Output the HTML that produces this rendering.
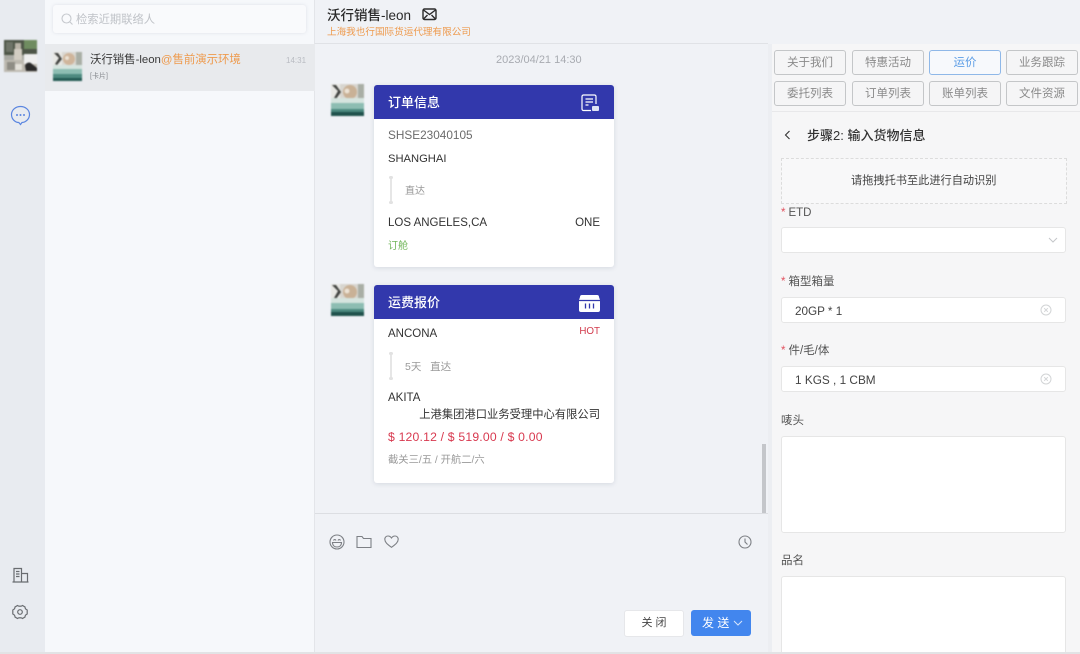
<!DOCTYPE html>
<html><head><meta charset="utf-8">
<style>
html,body{margin:0;padding:0;width:1080px;height:654px;overflow:hidden;background:#f0f2f6}
body{position:relative;font-family:"Liberation Sans","Noto Sans CJK SC",sans-serif;color:#333}
.a{position:absolute}
.t{position:absolute;white-space:nowrap;line-height:1}
.btn{position:absolute;width:70px;height:23px;border:1px solid #c4c6c8;border-radius:3px;text-align:center;font-size:11.500px;line-height:25px;color:#8a8a8a;background:#f5f5f6}
.card{position:absolute;left:374px;width:240px;background:#fff;border-radius:3px;box-shadow:0 1px 5px rgba(120,130,150,.22)}
.hd{position:absolute;left:0;top:0;width:240px;height:34px;background:#3238ac;border-radius:3px 3px 0 0}
.input{position:absolute;left:781px;width:283px;background:#fff;border:1px solid #e6e6e6;border-radius:3px}
.lb{position:absolute;white-space:nowrap;line-height:1;left:781px;font-size:11.500px;color:#555}
.lb span{color:#e2525f;margin-right:3px}
.av{filter:blur(.7px)}
</style></head><body>
<div class="a" style="left:0;top:0;width:45px;height:654px;background:#e8ebf0"></div>
<div class="a" style="left:45px;top:0;width:270px;height:654px;background:#f6f8fb"></div>
<div class="a" style="left:314px;top:0;width:1px;height:654px;background:#e3e5e9"></div>
<div class="a" style="left:45px;top:44px;width:270px;height:47px;background:#e8eaed"></div>
<div class="a" style="left:53px;top:5px;width:253px;height:28px;background:#f9fafc;border-radius:3px;box-shadow:0 0 3px rgba(150,160,175,.25)"></div>
<svg class="a" style="left:60px;top:12px" width="14" height="14" viewBox="0 0 14 14" fill="none" stroke="#c6c9ce" stroke-width="1.100"><circle cx="6.500" cy="6.500" r="4.500"/><path d="M10 10l2.500 2.500"/></svg>
<div class="t" style="left:76px;top:15px;font-size:11.300px;color:#bfc2c7">检索近期联络人</div>

<svg class="a av" style="left:4px;top:40px" width="33" height="32" viewBox="0 0 33 32"><rect width="33" height="32" rx="1" fill="#a9aaa3"/><rect width="33" height="15" fill="#4d5547"/><rect x="20" width="13" height="9" fill="#6f8c60"/><rect x="2" y="2" width="7" height="10" fill="#6e7468"/><rect x="11" y="3" width="6" height="6" fill="#b9b4a8"/><rect x="10" y="9" width="8" height="14" fill="#d2cdc2"/><rect y="20" width="33" height="12" fill="#bdb9b0"/><rect x="20" y="14" width="13" height="10" fill="#efefef"/><path d="M21 26a4 4 0 0 1 7-2l5 4v3H22z" fill="#2b2a2a"/><rect x="3" y="22" width="8" height="8" fill="#8f8d85"/><rect x="11" y="24" width="7" height="6" fill="#e3e0d9"/></svg>
<svg class="a av" style="left:53px;top:52px" width="29" height="29" viewBox="0 0 29 29"><rect width="29" height="29" fill="#dad8d2"/><rect width="9" height="14" fill="#e8e8e4"/><path d="M1 1l5 5-4 6 2 1 5-6-4-6z" fill="#3f413e"/><ellipse cx="16" cy="7" rx="6" ry="6" fill="#cfb59b"/><circle cx="14" cy="6" r="2" fill="#ece3d6"/><rect x="23" width="6" height="13" fill="#a9aea5"/><rect y="13" width="29" height="5" fill="#d6e4df"/><rect y="17" width="29" height="6" fill="#8dbdb2"/><rect y="22" width="29" height="4" fill="#4e8a80"/><rect y="26" width="29" height="3" fill="#235a53"/></svg>
<div class="t" style="left:90px;top:55px;font-size:11.400px;color:#3a3a3a">沃行销售-leon<span style="color:#ee9a4d">@售前演示环境</span></div>
<div class="t" style="left:286px;top:57px;font-size:8px;color:#b9bcc2">14:31</div>
<div class="t" style="left:90px;top:73px;font-size:7px;color:#85888d">[卡片]</div>

<svg class="a" style="left:10px;top:105px" width="21" height="21" viewBox="0 0 21 21" fill="none"><path d="M10.500 1.500c5 0 9 3.400 9 8s-4 8-7.500 8l-1.500 2-1.700-2C5 17.500 1.500 14 1.500 9.500s4-8 9-8z" stroke="#5b86e0" stroke-width="1.200"/><circle cx="7" cy="10" r="1" fill="#5b86e0"/><circle cx="10.500" cy="10" r="1" fill="#5b86e0"/><circle cx="14" cy="10" r="1" fill="#5b86e0"/></svg>
<svg class="a" style="left:12px;top:567px" width="17" height="16" viewBox="0 0 17 16" fill="none" stroke="#696c70" stroke-width="1.200"><path d="M.500 15h16M2 15V1.500h7.500V15M9.500 6.500h6V15M4 4.500h3.500M4 7h3.500M4 9.500h3.500"/></svg>
<svg class="a" style="left:12px;top:604px" width="16" height="16" viewBox="0 0 16 16" fill="none" stroke="#696c70" stroke-width="1.200"><path d="M5.500 1.500c1 1 4 1 5 0l2.500 1.500c0 1.500 1 2.500 2.200 3v4c-1.200.5-2.200 1.500-2.200 3l-2.500 1.500c-1-1-4-1-5 0L3 13c0-1.500-1-2.500-2.200-3V6C2 5.500 3 4.500 3 3z"/><circle cx="8" cy="8" r="2.300"/></svg>

<div class="a" style="left:315px;top:43px;width:453px;height:1px;background:#e0e2e6"></div>
<div class="t" style="left:327px;top:9px;font-size:13.500px;color:#2a2a2a;font-weight:500">沃行销售-leon</div>
<svg class="a" style="left:422px;top:8px" width="15" height="13" viewBox="0 0 15 13" fill="none" stroke="#2a2a2a" stroke-width="1.400"><rect x="1" y="1" width="13" height="10.500" rx="1.500"/><path d="M1.500 2l6 4.500 6-4.500M1.500 11l4-4M13.500 11l-4-4"/></svg>
<div class="t" style="left:327px;top:28px;font-size:9.600px;color:#ee9a4d">上海我也行国际货运代理有限公司</div>
<div class="t" style="left:496px;top:55px;font-size:11px;color:#a8abb1">2023/04/21 14:30</div>

<svg class="a av" style="left:331px;top:84px" width="33" height="32" viewBox="0 0 33 32"><rect width="33" height="32" rx="2" fill="#d8d6d0"/><rect width="9" height="15" fill="#e8e8e4"/><path d="M1 1l6 6-4 7 2 1 5-7-5-7z" fill="#3f413e"/><ellipse cx="19" cy="8" rx="7" ry="7" fill="#c9b196"/><circle cx="16" cy="7" r="2.500" fill="#ece3d6"/><rect x="27" width="6" height="14" fill="#a9aea5"/><rect y="14" width="33" height="6" fill="#d6e4df"/><rect y="19" width="33" height="6" fill="#8dbdb2"/><rect y="25" width="33" height="4" fill="#4d8a80"/><rect y="28" width="33" height="4" fill="#1f524c"/></svg>
<svg class="a av" style="left:331px;top:284px" width="33" height="32" viewBox="0 0 33 32"><rect width="33" height="32" rx="2" fill="#d8d6d0"/><rect width="9" height="15" fill="#e8e8e4"/><path d="M1 1l6 6-4 7 2 1 5-7-5-7z" fill="#3f413e"/><ellipse cx="19" cy="8" rx="7" ry="7" fill="#c9b196"/><circle cx="16" cy="7" r="2.500" fill="#ece3d6"/><rect x="27" width="6" height="14" fill="#a9aea5"/><rect y="14" width="33" height="6" fill="#d6e4df"/><rect y="19" width="33" height="6" fill="#8dbdb2"/><rect y="25" width="33" height="4" fill="#4d8a80"/><rect y="28" width="33" height="4" fill="#1f524c"/></svg>

<div class="card" style="top:85px;height:182px">
 <div class="hd"></div>
 <div class="t" style="left:14px;top:11px;font-size:13px;color:#fff;font-weight:500">订单信息</div>
 <svg class="a" style="left:207px;top:9px" width="19" height="18" viewBox="0 0 19 18" fill="none" stroke="#fff" stroke-width="1.200"><path d="M10 16.500H2.500a1.500 1.500 0 0 1-1.500-1.500V2.500A1.500 1.500 0 0 1 2.500 1h11A1.500 1.500 0 0 1 15 2.500V10M4.500 5h7.500M4.500 8h7.500M4.500 11h3"/><rect x="11" y="12" width="7" height="5" rx="1" fill="#dfe3f5" stroke="none"/></svg>
 <div class="t" style="left:14px;top:45px;font-size:11.800px;color:#6b6b6b">SHSE23040105</div>
 <div class="t" style="left:14px;top:69px;font-size:11.200px;color:#333">SHANGHAI</div>
 <div class="a" style="left:16px;top:92px;width:2px;height:26px;background:#e6e6e6"></div>
 <div class="a" style="left:15px;top:91px;width:4px;height:3px;border-radius:2px;background:#e2e2e2"></div>
 <div class="a" style="left:15px;top:116px;width:4px;height:3px;border-radius:2px;background:#e2e2e2"></div>
 <div class="t" style="left:31px;top:102px;font-size:10px;color:#999">直达</div>
 <div class="t" style="left:14px;top:133px;font-size:11.500px;color:#333">LOS ANGELES,CA</div>
 <div class="t" style="right:14px;top:133px;font-size:11.500px;color:#333">ONE</div>
 <div class="t" style="left:14px;top:157px;font-size:10px;color:#6fb558">订舱</div>
</div>

<div class="card" style="top:285px;height:198px">
 <div class="hd"></div>
 <div class="t" style="left:14px;top:11px;font-size:13px;color:#fff;font-weight:500">运费报价</div>
 <svg class="a" style="left:205px;top:10px" width="21" height="17" viewBox="0 0 21 17"><path d="M3 0h15a2 2 0 0 1 2 2l1 3v10a2 2 0 0 1-2 2H2a2 2 0 0 1-2-2V5l1-3a2 2 0 0 1 2-2z" fill="#fff"/><path d="M0 5.500h21" stroke="#3238ac" stroke-width="1.300"/><path d="M6.500 8.500v5M10.500 8.500v5M14.500 8.500v5" stroke="#3238ac" stroke-width="1.300"/></svg>
 <div class="t" style="left:14px;top:44px;font-size:11.500px;color:#333">ANCONA</div>
 <div class="t" style="right:14px;top:42px;font-size:9.800px;color:#d23a4c">HOT</div>
 <div class="a" style="left:16px;top:68px;width:2px;height:26px;background:#e6e6e6"></div>
 <div class="a" style="left:15px;top:67px;width:4px;height:3px;border-radius:2px;background:#e2e2e2"></div>
 <div class="a" style="left:15px;top:92px;width:4px;height:3px;border-radius:2px;background:#e2e2e2"></div>
 <div class="t" style="left:31px;top:77px;font-size:10.500px;color:#999">5天 &nbsp;&nbsp;直达</div>
 <div class="t" style="left:14px;top:108px;font-size:11.500px;color:#333">AKITA</div>
 <div class="t" style="right:14px;top:125px;font-size:11.300px;color:#333">上港集团港口业务受理中心有限公司</div>
 <div class="t" style="left:14px;top:146px;font-size:12.200px;color:#d8394f;letter-spacing:.2px">$ 120.12 / $ 519.00 / $ 0.00</div>
 <div class="t" style="left:14px;top:171px;font-size:10.300px;color:#999">截关三/五 / 开航二/六</div>
</div>

<div class="a" style="left:762px;top:444px;width:4px;height:70px;background:#c4c6ca"></div>
<div class="a" style="left:315px;top:513px;width:453px;height:1px;background:#dcdee2"></div>
<svg class="a" style="left:329px;top:534px" width="16" height="16" viewBox="0 0 16 16" fill="none" stroke="#7d8085" stroke-width="1.100"><circle cx="8" cy="8" r="7"/><path d="M3.500 8.500h9c0 3-2 4.500-4.500 4.500s-4.500-1.500-4.500-4.500zM4.500 6.500c.5-1.200 2-1.200 2.500 0M9 6.500c.5-1.200 2-1.200 2.500 0"/></svg>
<svg class="a" style="left:356px;top:535px" width="16" height="14" viewBox="0 0 16 14" fill="none" stroke="#7d8085" stroke-width="1.100"><path d="M1 12.500V1.500h5l1.500 2H15v9z"/></svg>
<svg class="a" style="left:384px;top:535px" width="15" height="13" viewBox="0 0 15 13" fill="none" stroke="#7d8085" stroke-width="1.100"><path d="M7.500 12.300C3 9 .8 7 .8 4.300.8 2.300 2.300 1 4 1c1.500 0 2.700.8 3.500 2C8.300 1.800 9.500 1 11 1c1.700 0 3.200 1.300 3.200 3.300C14.200 7 12 9 7.500 12.300z"/></svg>
<svg class="a" style="left:738px;top:535px" width="14" height="14" viewBox="0 0 14 14" fill="none" stroke="#7d8085" stroke-width="1.100"><circle cx="7" cy="7" r="6"/><path d="M7 3.500V7l2.500 2.500"/></svg>
<div class="a" style="left:624px;top:610px;width:58px;height:25px;background:#fff;border:1px solid #e6e7ea;border-radius:3px;text-align:center;font-size:11px;line-height:25px;color:#444">关 闭</div>
<div class="a" style="left:691px;top:610px;width:60px;height:26px;background:#4286ee;border-radius:3px;font-size:12px;line-height:26px;color:#fff"><span style="margin-left:11px">发 送</span></div>
<svg class="a" style="left:733px;top:620px" width="10" height="7" viewBox="0 0 10 7" fill="none" stroke="#d7e5fb" stroke-width="1"><path d="M1 1l4 4 4-4"/></svg>

<div class="a" style="left:768px;top:44px;width:312px;height:610px;background:#f6f6f7"></div>
<div class="a" style="left:768px;top:44px;width:4px;height:610px;background:#eceef2"></div>
<div class="btn" style="left:774px;top:50px">关于我们</div>
<div class="btn" style="left:852px;top:50px">特惠活动</div>
<div class="btn" style="left:929px;top:50px;border-color:#8fb8e8;color:#5d9ee6;background:#f7f9fc">运价</div>
<div class="btn" style="left:1006px;top:50px">业务跟踪</div>
<div class="btn" style="left:774px;top:81px">委托列表</div>
<div class="btn" style="left:852px;top:81px">订单列表</div>
<div class="btn" style="left:929px;top:81px">账单列表</div>
<div class="btn" style="left:1006px;top:81px">文件资源</div>
<div class="a" style="left:772px;top:111px;width:308px;height:1px;background:#e8e8ea"></div>

<svg class="a" style="left:783px;top:129px" width="9" height="12" viewBox="0 0 9 12" fill="none" stroke="#333" stroke-width="1.100"><path d="M6.500 2L2.500 6l4 4"/></svg>
<div class="t" style="left:807px;top:129px;font-size:13px;color:#333;font-weight:500">步骤2: 输入货物信息</div>
<div class="a" style="left:781px;top:158px;width:284px;height:44px;border:1px dashed #dcdcdc;background:#f8f8f9"></div>
<div class="t" style="left:851px;top:176px;font-size:11.200px;color:#444">请拖拽托书至此进行自动识别</div>

<div class="lb" style="top:208px"><span>*</span>ETD</div>
<div class="input" style="top:227px;height:24px"></div>
<svg class="a" style="left:1048px;top:237px" width="10" height="7" viewBox="0 0 10 7" fill="none" stroke="#c4c6ca" stroke-width="1"><path d="M1 1l4 4 4-4"/></svg>

<div class="lb" style="top:277px"><span>*</span>箱型箱量</div>
<div class="input" style="top:297px;height:24px"></div>
<div class="t" style="left:795px;top:306px;font-size:11.700px;color:#444">20GP * 1</div>
<svg class="a" style="left:1040px;top:304px" width="12" height="12" viewBox="0 0 12 12" fill="none" stroke="#d2d4d6" stroke-width="1"><circle cx="6" cy="6" r="5"/><path d="M4.200 4.200l3.600 3.600M7.800 4.200L4.200 7.800"/></svg>

<div class="lb" style="top:346px"><span>*</span>件/毛/体</div>
<div class="input" style="top:366px;height:24px"></div>
<div class="t" style="left:795px;top:375px;font-size:11.800px;color:#444">1 KGS , 1 CBM</div>
<svg class="a" style="left:1040px;top:373px" width="12" height="12" viewBox="0 0 12 12" fill="none" stroke="#d2d4d6" stroke-width="1"><circle cx="6" cy="6" r="5"/><path d="M4.200 4.200l3.600 3.600M7.800 4.200L4.200 7.800"/></svg>

<div class="lb" style="top:416px">唛头</div>
<div class="input" style="top:436px;height:95px"></div>
<div class="lb" style="top:556px">品名</div>
<div class="input" style="top:576px;height:90px"></div>

<div class="a" style="left:0;top:652px;width:1080px;height:2px;background:#e2e3e5"></div>
</body></html>
